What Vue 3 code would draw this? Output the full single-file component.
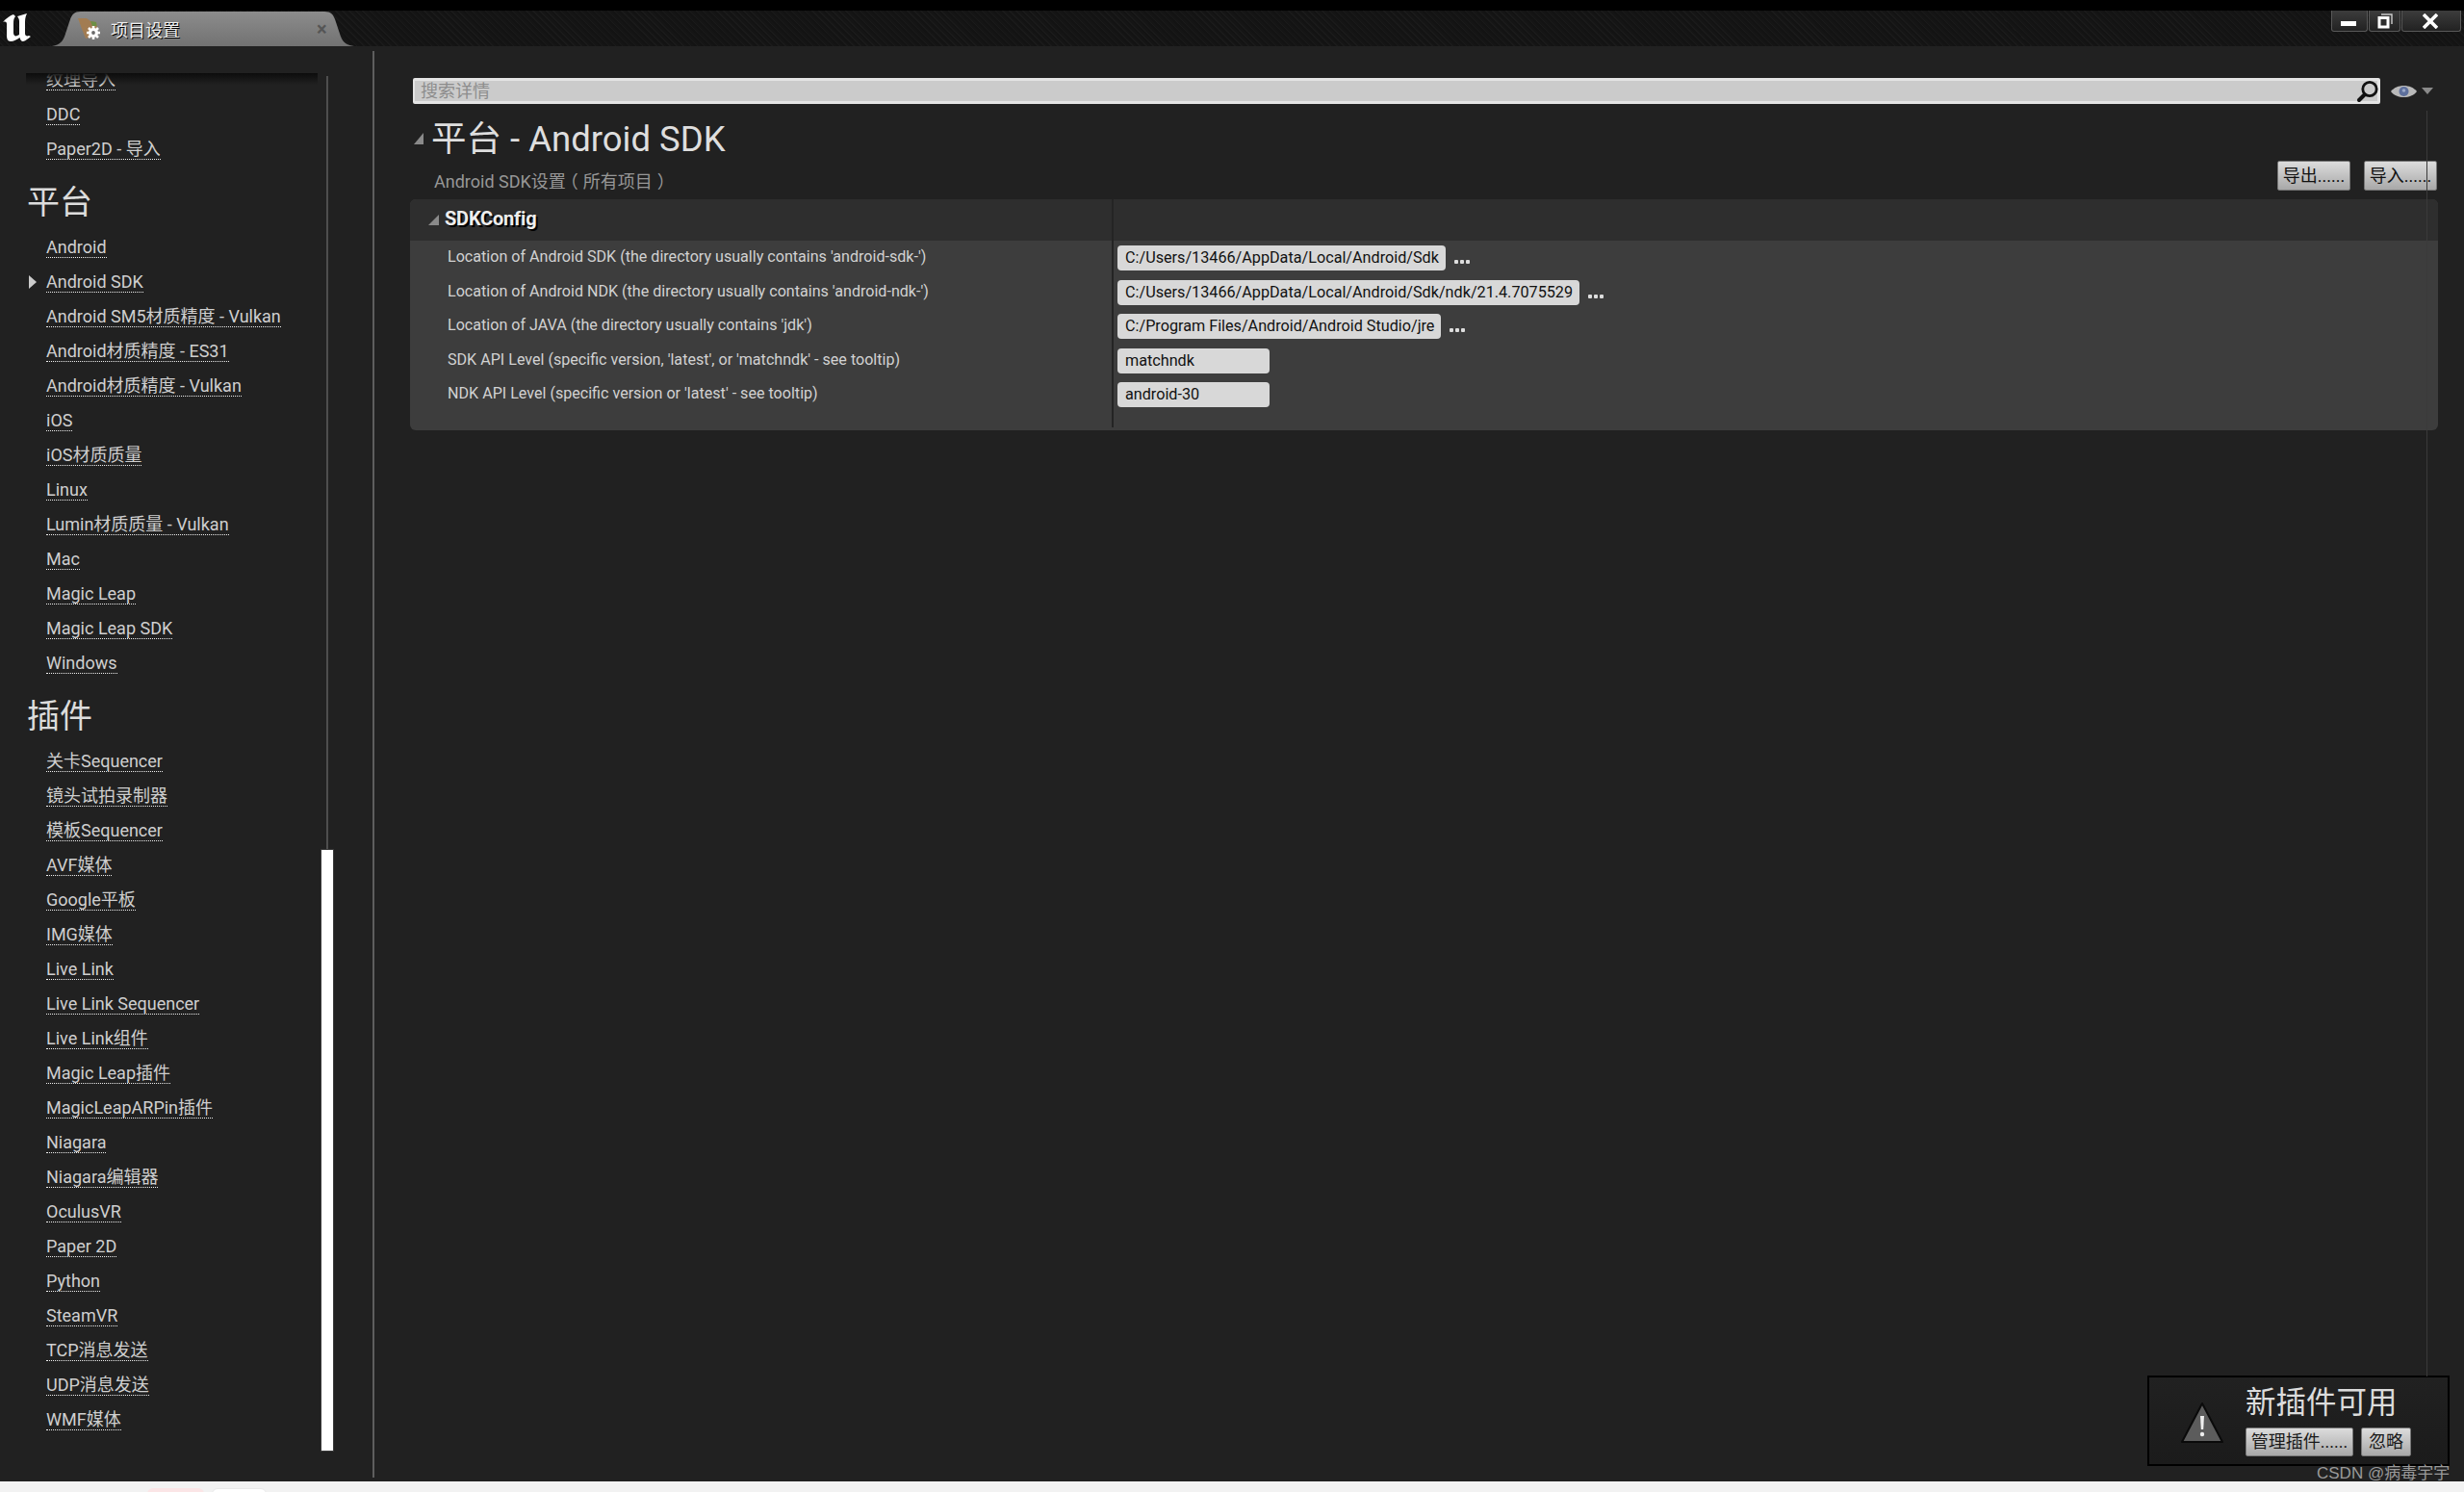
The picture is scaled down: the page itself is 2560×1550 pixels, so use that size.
<script setup>
const top1 = ['纹理导入', 'DDC', 'Paper2D - 导入']
const platform = ['Android', 'Android SDK', 'Android SM5材质精度 - Vulkan', 'Android材质精度 - ES31', 'Android材质精度 - Vulkan', 'iOS', 'iOS材质质量', 'Linux', 'Lumin材质质量 - Vulkan', 'Mac', 'Magic Leap', 'Magic Leap SDK', 'Windows']
const plugins = ['关卡Sequencer', '镜头试拍录制器', '模板Sequencer', 'AVF媒体', 'Google平板', 'IMG媒体', 'Live Link', 'Live Link Sequencer', 'Live Link组件', 'Magic Leap插件', 'MagicLeapARPin插件', 'Niagara', 'Niagara编辑器', 'OculusVR', 'Paper 2D', 'Python', 'SteamVR', 'TCP消息发送', 'UDP消息发送', 'WMF媒体']
const rows = [
  { label: "Location of Android SDK (the directory usually contains 'android-sdk-')", value: 'C:/Users/13466/AppData/Local/Android/Sdk', browse: true },
  { label: "Location of Android NDK (the directory usually contains 'android-ndk-')", value: 'C:/Users/13466/AppData/Local/Android/Sdk/ndk/21.4.7075529', browse: true },
  { label: "Location of JAVA (the directory usually contains 'jdk')", value: 'C:/Program Files/Android/Android Studio/jre', browse: true },
  { label: "SDK API Level (specific version, 'latest', or 'matchndk' - see tooltip)", value: 'matchndk', browse: false },
  { label: "NDK API Level (specific version or 'latest' - see tooltip)", value: 'android-30', browse: false }
]
</script>

<template>
  <div class="app">
    <div class="topstrip"></div>
    <header class="titlebar">
      <svg class="logo" width="30" height="30" viewBox="0 0 30 30">
        <path fill="#fff" d="M0 9C3 5 8 2 11 1L13 3C11 5 11 8 11 11L11 20C11 23 13 24 15 23L17 22L17 8C17 6 16 4 15 3L25 0C23 4 23 7 23 10L23 21C23 23 25 24 27 23L29 24C26 26 23 29 21 29C19 29 18 27 17.5 25C15 27 11 29 8 29C5 29 4 26 4 23L4 11C4 9 3 8 0 9Z" />
      </svg>
      <div class="tab">
        <svg class="tab-icon" width="25" height="24" viewBox="0 0 25 24">
          <path fill="#a27c52" d="M0 1L9 1L13 4L19 5L20 10L16 20L8 22L4 12Z" />
          <path fill="#6d8f45" d="M13 4L19 5L19.5 9L15 9Z" />
          <path stroke="#fff" stroke-width="2.6" d="M16 9V23M9 16H23M11 11L21 21M21 11L11 21" />
          <circle cx="16" cy="16" r="5" fill="#fff" />
          <circle cx="16" cy="16" r="1.9" fill="#6a6a6a" />
        </svg>
        <span class="tab-text">项目设置</span>
        <span class="tab-close">×</span>
      </div>
      <div class="winctl">
        <div class="win win-min"><span class="min-glyph"></span></div>
        <div class="win win-res">
          <svg width="16" height="16" viewBox="0 0 16 16"><path fill="none" stroke="#ccc" stroke-width="1.4" d="M4 1H15V11" /><rect x="2" y="4.5" width="9" height="9.5" fill="none" stroke="#fff" stroke-width="3" /></svg>
        </div>
        <div class="win win-close">
          <svg width="16" height="16" viewBox="0 0 16 16"><path stroke="#fff" stroke-width="3.6" d="M1 1L15 15M15 1L1 15" /></svg>
        </div>
      </div>
    </header>

    <div class="body">
      <aside class="sidebar">
        <nav class="nav">
          <div class="nav-shadow"></div>
          <div class="nav-inner">
            <div v-for="t in top1" :key="t" class="item"><span class="link">{{ t }}</span></div>
            <h2 class="heading">平台</h2>
            <div v-for="t in platform" :key="t" class="item">
              <i v-if="t === 'Android SDK'" class="cur"></i>
              <span class="link">{{ t }}</span>
            </div>
            <h2 class="heading">插件</h2>
            <div v-for="t in plugins" :key="t" class="item"><span class="link">{{ t }}</span></div>
          </div>
        </nav>
        <div class="scroller">
          <div class="track"></div>
          <div class="thumb"></div>
        </div>
        <div class="vline"></div>
      </aside>

      <main class="main">
        <div class="scrollline"></div>
        <div class="search-row">
          <div class="search">
            <span class="placeholder">搜索详情</span>
            <svg class="search-icon" width="24" height="24" viewBox="0 0 24 24"><circle cx="14" cy="9.5" r="7.2" fill="none" stroke="#111" stroke-width="2.8" /><path stroke="#111" stroke-width="4" stroke-linecap="round" d="M8.5 15.5L3 21" /></svg>
          </div>
          <svg class="eye" width="27" height="16" viewBox="0 0 27 16"><path fill="#b9b9b9" d="M0 8C6 0 21 0 27 8C21 16 6 16 0 8Z" /><circle cx="13.5" cy="8" r="5" fill="#5d6f9c" /><circle cx="13.5" cy="7" r="1.8" fill="#9aa8c8" /></svg>
          <i class="eye-arrow"></i>
        </div>

        <div class="head">
          <div class="head-left">
            <div class="title-line"><i class="tri tri-title"></i><h1 class="title">平台 - Android SDK</h1></div>
            <div class="subtitle">Android SDK设置<span class="pl">（</span>所有项目<span class="pr">）</span></div>
          </div>
          <div class="head-btns">
            <button class="btn">导出......</button>
            <button class="btn">导入......</button>
          </div>
        </div>

        <section class="panel">
          <div class="panel-head">
            <div class="cell-l"><i class="tri tri-sec"></i><span class="sec-title">SDKConfig</span></div>
            <div class="cell-r"></div>
          </div>
          <div class="panel-body">
            <div v-for="r in rows" :key="r.label" class="row">
              <div class="cell-l label">{{ r.label }}</div>
              <div class="cell-r value">
                <div class="input" :class="{ short: !r.browse }">{{ r.value }}</div>
                <span v-if="r.browse" class="dots"><b></b><b></b><b></b></span>
              </div>
            </div>
            <div class="row-end"><div class="cell-l"></div><div class="cell-r"></div></div>
          </div>
        </section>

        <div class="toast">
          <svg class="warn" width="46" height="44" viewBox="0 0 46 44">
            <path fill="#5c5c5c" stroke="#0a0a0a" stroke-width="2" stroke-linejoin="round" d="M23 2L44 42H2Z" />
            <path fill="#eee" d="M21 15H25L24.2 29H21.8Z" /><circle cx="23" cy="34" r="2.2" fill="#eee" />
          </svg>
          <div class="toast-col">
            <div class="toast-title">新插件可用</div>
            <div class="toast-btns">
              <button class="btn tbtn wide">管理插件......</button>
              <button class="btn tbtn narrow">忽略</button>
            </div>
          </div>
        </div>
      </main>
    </div>

    <footer class="bottom">
      <span class="pill pink"></span>
      <span class="pill white"></span>
      <span class="mark">CSDN @病毒宇宇</span>
    </footer>
  </div>
</template>

<style scoped>
.app {
  position: relative;
  width: 2560px;
  height: 1550px;
  display: flex;
  flex-direction: column;
  background: #212121;
  overflow: hidden;
  font-family: Roboto, "Noto Sans CJK SC", sans-serif;
}
.topstrip { height: 11px; background: #000; flex: none; }
.titlebar {
  height: 37px;
  flex: none;
  display: flex;
  align-items: flex-start;
  background: repeating-linear-gradient(45deg, #131313 0 2px, #1a1a1a 2px 3px, #151515 3px 5px);
}
.logo { margin: 3px 0 0 3px; flex: none; }
.tab {
  margin: 1px 0 0 21px;
  width: 314px;
  height: 36px;
  flex: none;
  display: flex;
  align-items: center;
  background: linear-gradient(#8c8c8c, #727272);
  clip-path: path("M0 36C6 35 10 33 13 26L19 8C21 3 23 0 30 0H283C290 0 292 3 294 8L300 26C303 33 307 35 314 36Z");
}
.tab-icon { margin-left: 27px; flex: none; }
.tab-text {
  margin-left: 9px;
  font-size: 18px;
  color: #eee;
  text-shadow: 1px 1px 0 #000;
}
.tab-close { margin-left: 142px; font-size: 20px; font-weight: 700; color: #555; line-height: 1; }
.winctl { margin-left: auto; margin-right: 3px; display: flex; gap: 1px; flex: none; }
.win {
  height: 22px;
  display: flex;
  align-items: center;
  justify-content: center;
  background: linear-gradient(#3c3c3c, #222);
  border: 1px solid #595959;
  border-top: none;
  border-radius: 0 0 3px 3px;
  box-sizing: border-box;
}
.win-min { width: 38px; }
.win-res { width: 33px; }
.win-close { width: 62px; }
.win-close svg { margin-right: 2px; }
.min-glyph { width: 16px; height: 5px; background: #fff; margin-top: 5px; margin-right: 2px; }

.body { flex: 1; display: flex; min-height: 0; }
.sidebar { width: 389px; flex: none; display: flex; }
.nav {
  position: relative;
  width: 334px;
  flex: none;
  margin-top: 28px;
  overflow: hidden;
}
.nav-shadow {
  position: absolute;
  left: 27px;
  right: 4px;
  top: 0;
  height: 12px;
  background: linear-gradient(#0c0c0c, rgba(12, 12, 12, 0));
  z-index: 1;
}
.nav-inner { margin-top: -11px; }
.item {
  position: relative;
  height: 36px;
  padding-left: 48px;
  display: flex;
  align-items: center;
}
.link {
  font-size: 18px;
  line-height: 21px;
  color: #cfcfcf;
  border-bottom: 1px dotted #eee;
  white-space: nowrap;
}
.cur {
  position: absolute;
  left: 30px;
  top: 11px;
  width: 8px;
  height: 14px;
  background: #ccc;
  clip-path: polygon(0 0, 100% 50%, 0 100%);
}
.heading {
  margin: 0;
  height: 66px;
  padding-left: 28px;
  font-size: 34px;
  font-weight: 400;
  line-height: 75px;
  color: #dcdcdc;
}
.scroller { width: 12px; flex: none; display: flex; flex-direction: column; align-items: center; padding-top: 31px; padding-bottom: 32px; }
.track { width: 2px; flex: none; height: 804px; background: #4e4e4e; }
.thumb { flex: none; width: 12px; height: 624px; background: #fff; box-shadow: 0 0 0 1px #3a3a3a; }
.vline { margin: 5px 0 4px 41px; width: 2px; background: #5e5e5e; flex: none; }

.main { position: relative; flex: 1; min-width: 0; }
.scrollline { position: absolute; left: 2132px; top: 67px; width: 1px; height: 1315px; background: #3a3a3a; z-index: 2; }
.search-row { display: flex; align-items: center; margin: 33px 0 0 40px; height: 27px; }
.search {
  width: 2044px;
  height: 27px;
  box-sizing: border-box;
  flex: none;
  display: flex;
  align-items: center;
  justify-content: space-between;
  padding: 0 0 0 6px;
  background: #cbcbcb;
  border: 3px solid #e4e4e4;
  border-left-width: 2px;
  border-radius: 2px;
}
.search-icon { margin-right: -2px; flex: none; }
.placeholder { font-size: 18px; color: #8d8d8d; line-height: 21px; }
.eye { margin-left: 11px; flex: none; }
.eye-arrow {
  margin-left: 5px;
  width: 12px;
  height: 7px;
  background: #8a8a8a;
  clip-path: polygon(0 0, 100% 0, 50% 100%);
}
.head { height: 99px; display: flex; justify-content: space-between; }
.head-left { margin-left: 41px; padding-top: 17px; }
.title-line { display: flex; align-items: center; height: 40px; }
.title { margin: 0 0 0 8px; font-size: 36.5px; font-weight: 400; line-height: 40px; color: #dedede; white-space: nowrap; }
.tri { display: block; background: #8a8a8a; clip-path: polygon(100% 0, 100% 100%, 0 100%); flex: none; }
.tri-title { width: 10px; height: 12px; margin-top: -2px; }
.subtitle { margin: 12px 0 0 21px; font-size: 18px; line-height: 24px; color: #979797; white-space: nowrap; }
.pl { display: inline-block; transform: translateX(-5px); }
.pr { display: inline-block; transform: translateX(5px); }
.head-btns { display: flex; gap: 14px; padding: 59px 28px 0 0; }
.btn {
  margin: 0;
  width: 76px;
  height: 31px;
  padding: 0;
  border: 1px solid #777;
  border-radius: 2px;
  background: linear-gradient(#dcdcdc, #a8a8a8);
  color: #111;
  font-family: inherit;
  font-size: 18px;
  line-height: 1;
  white-space: nowrap;
  cursor: default;
}
.panel { margin-left: 37px; width: 2107px; height: 240px; background: #3d3d3d; border-radius: 6px; overflow: hidden; }
.panel-head { height: 43px; display: flex; background: #2e2e2e; }
.panel-head .cell-l { display: flex; align-items: center; padding-left: 19px; padding-bottom: 3px; }
.cell-l { width: 729px; box-sizing: border-box; flex: none; }
.cell-r { flex: 1; border-left: 2px solid #242424; min-width: 0; }
.tri-sec { width: 11px; height: 11px; margin-right: 6px; margin-top: 3px; }
.sec-title { font-size: 20px; font-weight: 700; color: #eee; text-shadow: 2px 2px 0 #000; letter-spacing: -0.2px; }
.panel-body { padding-top: 5px; height: 197px; box-sizing: border-box; display: flex; flex-direction: column; }
.row { height: 35.5px; flex: none; display: flex; }
.label { padding: 0 0 0 39px; font-size: 16.1px; line-height: 24px; color: #d2d2d2; white-space: nowrap; overflow: hidden; }
.row-end { flex: 1; display: flex; margin-bottom: 3px; }
.panel-body .row:first-child .cell-r { margin-top: -5px; padding-top: 5px; }
.value { display: flex; align-items: flex-start; padding-left: 4px; }
.input {
  height: 26px;
  box-sizing: border-box;
  padding: 0 7px 0 8px;
  font-size: 16.2px;
  line-height: 25px;
  color: #111;
  background: #d8d8d8;
  border-radius: 4px;
  white-space: nowrap;
}
.input.short { width: 158px; }
.dots { display: flex; gap: 2px; margin: 15px 0 0 9px; }
.dots b { width: 4px; height: 4px; border-radius: 1px; background: #ddd; }

.toast {
  position: absolute;
  left: 1842px;
  top: 1381px;
  width: 314px;
  height: 94px;
  box-sizing: border-box;
  display: flex;
  background: linear-gradient(#212121, #1b1b1b);
  border: 2px solid #000;
}
.warn { margin: 25px 0 0 32px; flex: none; }
.toast-col { margin-left: 22px; }
.toast-title { font-size: 31.5px; line-height: 36px; margin-top: 9px; color: #dcdcdc; white-space: nowrap; }
.toast-btns { display: flex; gap: 8px; margin-top: 7px; }
.tbtn { height: 30px; color: #1a1a1a; }
.wide { width: 112px; }
.narrow { width: 52px; }

.bottom { position: relative; height: 11px; flex: none; background: #f2f2f2; }
.pill { position: absolute; top: 7px; height: 8px; border-radius: 6px 6px 0 0; }
.pink { left: 153px; width: 59px; background: #fbe5e6; }
.white { left: 220px; width: 57px; background: #fff; border: 1px solid #e9e9e9; box-sizing: border-box; }
.mark {
  position: absolute;
  left: 2407px;
  top: -20px;
  font-family: "Liberation Sans", "Noto Sans CJK SC", sans-serif;
  font-size: 17px;
  line-height: 24px;
  color: #9a9a9a;
  white-space: nowrap;
}
</style>
